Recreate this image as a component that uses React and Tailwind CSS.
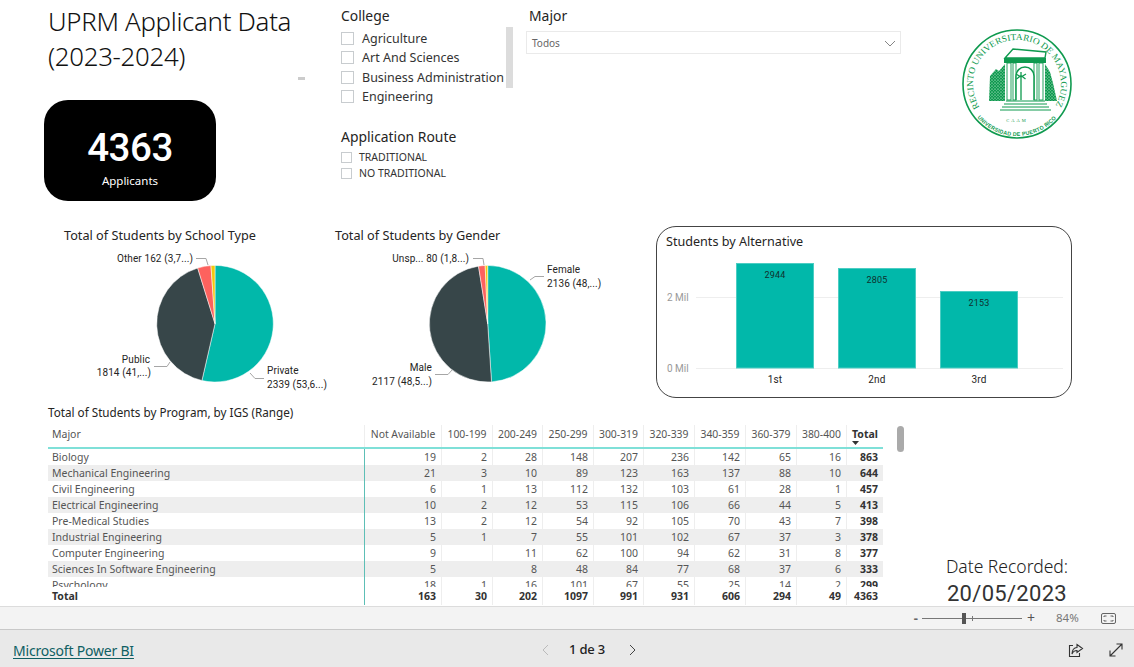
// UPRM applicant report, Power BI embed view
const SEGOE = 'font-["Noto_Sans",sans-serif]'
const DIN = 'font-["Roboto",sans-serif]'

const COLLEGES = ['Agriculture', 'Art And Sciences', 'Business Administration', 'Engineering']
const COLUMNS = ['Not Available', '100-199', '200-249', '250-299', '300-319', '320-339', '340-359', '360-379', '380-400']
const ROWS = [
  ['Biology', 19, 2, 28, 148, 207, 236, 142, 65, 16, 863],
  ['Mechanical Engineering', 21, 3, 10, 89, 123, 163, 137, 88, 10, 644],
  ['Civil Engineering', 6, 1, 13, 112, 132, 103, 61, 28, 1, 457],
  ['Electrical Engineering', 10, 2, 12, 53, 115, 106, 66, 44, 5, 413],
  ['Pre-Medical Studies', 13, 2, 12, 54, 92, 105, 70, 43, 7, 398],
  ['Industrial Engineering', 5, 1, 7, 55, 101, 102, 67, 37, 3, 378],
  ['Computer Engineering', 9, '', 11, 62, 100, 94, 62, 31, 8, 377],
  ['Sciences In Software Engineering', 5, '', 8, 48, 84, 77, 68, 37, 6, 333],
  ['Psychology', 18, 1, 16, 101, 67, 55, 25, 14, 2, 299],
]
const TOTALS = ['Total', 163, 30, 202, 1097, 991, 931, 606, 294, 49, 4363]
const GRID = 'grid grid-cols-[317px_77px_51px_50px_51px_50px_51px_51px_51px_50px_36px]'

const PIE_COLORS = ['#01B8AA', '#374649', '#FD625E', '#F2C80F']

// slices go clockwise from 12 o'clock
const slicePaths = (cx, cy, r, shares) => {
  let angle = 0
  return shares.map((share) => {
    const start = angle
    angle += share * Math.PI * 2
    const x1 = cx + r * Math.sin(start)
    const y1 = cy - r * Math.cos(start)
    const x2 = cx + r * Math.sin(angle)
    const y2 = cy - r * Math.cos(angle)
    return `M${cx} ${cy}L${x1} ${y1}A${r} ${r} 0 ${share > 0.5 ? 1 : 0} 1 ${x2} ${y2}Z`
  })
}

const PieChart = ({ title, titleClass, widthClass, viewBox, cx, shares, labels, leaders }) => {
  const [vx, vy, vw, vh] = viewBox
  return (
    <div className={`${widthClass} shrink-0`}>
      <p className={`${SEGOE} ${titleClass} h-[18px] text-[12.7px] leading-[18px] text-[#252423] whitespace-nowrap`}>{title}</p>
      <svg width={vw} height={vh} viewBox={viewBox.join(' ')} className={`${DIN} block`}>
        {slicePaths(cx, 323.7, 58.3, shares).map((d, i) => (
          <path key={i} d={d} fill={PIE_COLORS[i]} stroke="#fff" strokeWidth="0.5" />
        ))}
        {leaders.map((points) => (
          <polyline key={points} points={points} fill="none" stroke="#a6a6a6" strokeWidth="1" />
        ))}
        {labels.map(([text, x, y, anchor]) => (
          <text key={text} x={x} y={y} textAnchor={anchor} fontSize="10" letterSpacing="0.1" fill="#252423">{text}</text>
        ))}
      </svg>
    </div>
  )
}

const BARS = [
  { label: '1st', value: 2944, x: 736.5, top: 263.5 },
  { label: '2nd', value: 2805, x: 838.5, top: 268.5 },
  { label: '3rd', value: 2153, x: 940.5, top: 291.5 },
]

const BarChart = () => (
  <div className="ml-[46px] h-[172px] w-[416px] shrink-0 rounded-[20px] border border-[#444] pl-[9px] pt-[5px]">
    <p className={`${SEGOE} h-[18px] text-[12.6px] leading-[20px] text-[#252423]`}>Students by Alternative</p>
    <svg width="404" height="143" viewBox="666 250 404 143" className={`${DIN} block`}>
      <line x1="696" x2="1063" y1="297.5" y2="297.5" stroke="#eee" />
      <line x1="696" x2="1063" y1="368.5" y2="368.5" stroke="#eee" />
      <text x="667" y="301" fontSize="10" fill="#999">2 Mil</text>
      <text x="667" y="372" fontSize="10" fill="#999">0 Mil</text>
      {BARS.map((bar) => (
        <g key={bar.label}>
          <rect x={bar.x} y={bar.top} width="77" height={368 - bar.top} fill="#01B8AA" stroke="#4ccdc3" />
          <text x={bar.x + 38.5} y={bar.top + 14.5} textAnchor="middle" fontSize="9" letterSpacing="0.2" fill="#10302e">{bar.value}</text>
          <text x={bar.x + 38.5} y="383" textAnchor="middle" fontSize="10" letterSpacing="0.2" fill="#252423">{bar.label}</text>
        </g>
      ))}
    </svg>
  </div>
)

// seal of the Mayagüez campus, simplified
const Seal = () => (
  <svg width="112" height="112" viewBox="0 0 112 112" className="shrink-0">
    <defs>
      <path id="seal-top" d="M18.7 79.3 A44 44 0 1 1 93.3 79.3" />
      <path id="seal-bottom" d="M19.2 86.9 A48 48 0 0 0 92.8 86.9" />
      <pattern id="seal-leaves" width="3" height="3" patternUnits="userSpaceOnUse">
        <rect width="3" height="3" fill="#0f9a4f" />
        <circle cx="1" cy="1" r="0.6" fill="#fff" />
        <circle cx="2.4" cy="2.3" r="0.35" fill="#fff" />
      </pattern>
    </defs>
    <circle cx="56" cy="56" r="54" fill="none" stroke="#0f9a4f" strokeWidth="1.6" />
    <text fontSize="9" fontFamily="Liberation Serif, serif" fill="#0f9a4f">
      <textPath href="#seal-top" startOffset="0" textLength="185" lengthAdjust="spacingAndGlyphs">RECINTO UNIVERSITARIO DE MAYAGUEZ</textPath>
    </text>
    <text fontSize="5.6" fontWeight="700" fontFamily="Liberation Sans, sans-serif" fill="#0f9a4f" dominantBaseline="hanging">
      <textPath href="#seal-bottom" startOffset="0" textLength="83" lengthAdjust="spacingAndGlyphs">UNIVERSIDAD DE PUERTO RICO</textPath>
    </text>
    <text x="56" y="94" textAnchor="middle" fontSize="4.5" fontFamily="Liberation Serif, serif" letterSpacing="2" fill="#0f9a4f">CAAM</text>
    {/* foliage either side */}
    <path d="M29 48 L35 41 L38 43 L44 36 V73 H28 Z M84 36 L89 44 L92 55 L96 73 H84 Z" fill="url(#seal-leaves)" />
    {/* arcade */}
    <path d="M44 30 L52 21 L85 24 L84 30Z" fill="#fff" stroke="#0f9a4f" strokeWidth="1.4" />
    <rect x="43" y="30" width="42" height="5" fill="#0f9a4f" />
    <rect x="46" y="35" width="4" height="37" fill="#fff" stroke="#0f9a4f" strokeWidth="0.9" />
    <rect x="52" y="35" width="3" height="37" fill="#fff" stroke="#0f9a4f" strokeWidth="0.9" />
    <rect x="73" y="35" width="3" height="37" fill="#fff" stroke="#0f9a4f" strokeWidth="0.9" />
    <rect x="78" y="35" width="4" height="37" fill="#fff" stroke="#0f9a4f" strokeWidth="0.9" />
    <path d="M55 72 V48 A9 9 0 0 1 73 48 V72" fill="#fff" stroke="#0f9a4f" strokeWidth="1.5" />
    {/* palm in the arch */}
    <path d="M60 72 V49 M55 46 L60 49 L65 46 M55.5 51 L60 47.5 L64.5 51 M60 44 V49" stroke="#0f9a4f" strokeWidth="1.3" fill="none" />
    {/* steps */}
    <path d="M45 73 H84 M43 76 H86 M41 79 H88 M39 82 H90" stroke="#0f9a4f" strokeWidth="1" />
  </svg>
)

const Checkbox = ({ size }) => <span className={`${size} block shrink-0 border border-[#c8cccf] bg-white`} />

const TopRow = () => (
  <div className={`${SEGOE} flex h-[226px] text-[#252423]`}>
    <div className="w-[298px] shrink-0 pl-[44px]">
      <h1 className="ml-[4px] pt-[4px] text-[25.8px] font-light leading-[35px] tracking-[-0.3px] text-[#111] whitespace-nowrap">
        UPRM Applicant Data<br />(2023-2024)
      </h1>
      <div className="mt-[26px] flex h-[101px] w-[172px] flex-col items-center rounded-[24px] bg-black text-white">
        <span className={`${DIN} mt-[25px] text-[38.5px] font-medium leading-[46px] tracking-[-0.5px]`}>4363</span>
        <span className="mt-[2px] text-[11.5px] leading-[16px]">Applicants</span>
      </div>
    </div>
    <span className="mt-[77px] h-[3px] w-[7px] shrink-0 bg-[#ccc]" />
    <div className="ml-[36px] w-[172px] shrink-0 pt-[6px]">
      <p className="text-[13.9px] leading-[20px]">College</p>
      <div className="relative mt-[3px] flex">
        <div className="w-[165px]">
          {COLLEGES.map((name) => (
            <div key={name} className="flex h-[19.3px] items-center gap-[8px]">
              <Checkbox size="h-[13px] w-[13px]" />
              <span className="text-[12.5px] leading-[19px] text-[#333] whitespace-nowrap">{name}</span>
            </div>
          ))}
        </div>
        <span className="absolute left-[165px] top-[-2px] h-[61px] w-[7px] bg-[#dcdcdc]" />
      </div>
      <p className="mt-[21px] text-[13.9px] leading-[20px] whitespace-nowrap">Application Route</p>
      <div className="mt-[2px]">
        {['TRADITIONAL', 'NO TRADITIONAL'].map((name) => (
          <div key={name} className="flex h-[16px] items-center gap-[7px]">
            <Checkbox size="h-[11px] w-[11px]" />
            <span className="text-[10.5px] leading-[16px] text-[#333] whitespace-nowrap">{name}</span>
          </div>
        ))}
      </div>
    </div>
    <div className="ml-[13px] w-[375px] shrink-0 pt-[6px]">
      <p className="pl-[3px] text-[13.9px] leading-[20px]">Major</p>
      <div className="mt-[5px] flex h-[23px] items-center justify-between border border-[#eaeaea] pl-[5px] pr-[4px] pt-[2px]">
        <span className="text-[10px] text-[#666]">Todos</span>
        <svg width="12" height="7" viewBox="0 0 12 7" fill="none" stroke="#777" strokeWidth="0.9"><path d="M1 1l5 5 5-5" /></svg>
      </div>
    </div>
    <div className="ml-[60px] pt-[28px]">
      <Seal />
    </div>
  </div>
)

const MiddleRow = () => (
  <div className="flex h-[178px]">
    <PieChart
      title="Total of Students by School Type"
      titleClass="pl-[16px]"
      widthClass="w-[282px] ml-[48px]"
      viewBox={[48, 244, 282, 158]}
      cx={215}
      shares={[0.536, 0.416, 0.037, 0.011]}
      leaders={['196,258.5 206,258.5 208,265', '154,366.5 167,366.5 170,362', '250,373 255,378.5 264,378.5']}
      labels={[
        ['Other 162 (3,7...)', 193, 262, 'end'],
        ['Public', 150, 363, 'end'],
        ['1814 (41,...)', 151, 376, 'end'],
        ['Private', 267, 374, 'start'],
        ['2339 (53,6...)', 267, 388, 'start'],
      ]}
    />
    <PieChart
      title="Total of Students by Gender"
      titleClass="pl-[5px]"
      widthClass="w-[280px]"
      viewBox={[330, 244, 280, 158]}
      cx={487.7}
      shares={[0.4896, 0.4852, 0.0183, 0.0069]}
      leaders={['473,258.5 483,258.5 484,265', '435,374.5 448,374.5 452,370', '530,280 535,276.5 544,276.5']}
      labels={[
        ['Unsp... 80 (1,8...)', 469, 262, 'end'],
        ['Male', 432, 371, 'end'],
        ['2117 (48,5...)', 432, 385, 'end'],
        ['Female', 547, 273, 'start'],
        ['2136 (48,...)', 547, 287, 'start'],
      ]}
    />
    <BarChart />
  </div>
)

const MatrixTable = () => (
  <div className={`${SEGOE} w-[835px] shrink-0 text-[10.5px] text-[#555]`}>
    <div className={`${GRID} h-[24px] border-b-2 border-[#7fe0d8]`}>
      <span className="border-r border-[#eee] pl-[4px] leading-[19px]">Major</span>
      {COLUMNS.map((col) => (
        <span key={col} className="border-r border-[#eee] text-center text-[10.4px] leading-[19px] whitespace-nowrap">{col}</span>
      ))}
      <span className="relative pl-[5px] font-bold leading-[19px] text-[#333]">
        Total
        <svg width="7" height="4" viewBox="0 0 7 4" className="absolute left-[5px] top-[16px]"><path d="M0 0h7L3.5 4z" fill="#333" /></svg>
      </span>
    </div>
    <div className="h-[138px] overflow-hidden">
      {ROWS.map(([major, ...nums], i) => (
        <div key={major} className={`${GRID} h-[16px] leading-[16px] ${i % 2 === 1 ? 'bg-[#eee]' : ''}`}>
          <span className="border-r border-[#5dbfb6] pl-[4px] whitespace-nowrap">{major}</span>
          {nums.map((n, j) => (
            <span key={j} className={j === 9 ? 'pr-[5px] text-right font-bold text-[#333]' : 'border-r border-[#eee] pr-[5px] text-right'}>{n}</span>
          ))}
        </div>
      ))}
    </div>
    <div className={`${GRID} h-[17px] font-bold leading-[18px] text-[#333]`}>
      {TOTALS.map((n, i) => (
        <span key={n} className={i === 0 ? 'border-r border-[#5dbfb6] pl-[4px]' : i === 10 ? 'pr-[5px] text-right' : 'border-r border-[#eee] pr-[5px] text-right'}>{n}</span>
      ))}
    </div>
  </div>
)

const BottomRow = () => (
  <div className="flex flex-1 flex-col">
    <p className={`${SEGOE} ml-[48px] h-[21px] text-[11.7px] leading-[17px] text-[#252423]`}>Total of Students by Program, by IGS (Range)</p>
    <div className="ml-[48px] flex flex-1">
      <MatrixTable />
      <span className="ml-[14px] mt-[1px] h-[26px] w-[7px] shrink-0 rounded-full bg-[#aaa]" />
      <div className="flex w-[206px] flex-col items-center justify-end">
        <span className={`${SEGOE} text-[17.5px] font-light leading-[32px] text-[#222]`}>Date Recorded:</span>
        <span className={`${DIN} text-[22px] leading-[24px] tracking-[0.3px] text-[#333]`}>20/05/2023</span>
      </div>
    </div>
  </div>
)

const StatusBar = () => (
  <div className={`${SEGOE} flex h-[24px] shrink-0 items-center justify-end border-y border-[#dcdcdc] bg-[#f3f3f3] border-b-[#c8c8c8] pr-[18px] text-[#666]`}>
    <span className="text-[13px] font-bold leading-none">-</span>
    <div className="relative ml-[4px] h-[1px] w-[100px] bg-[#777]">
      <span className="absolute left-[40px] top-[-5px] h-[11px] w-[4px] bg-[#555]" />
      <span className="absolute left-[50px] top-[-2px] h-[5px] w-[1px] bg-[#777]" />
    </div>
    <span className="ml-[5px] text-[14px] leading-none text-[#555]">+</span>
    <span className="ml-[21px] w-[24px] text-[11.5px] text-[#777]">84%</span>
    <svg width="15" height="11" viewBox="0 0 15 11" fill="none" stroke="#555" strokeWidth="0.9" className="ml-[21px]">
      <rect x="0.5" y="0.5" width="14" height="10" rx="1.5" />
      <path d="M3 4V3h2.5M12 4V3H9.5M3 7v1h2.5M12 7v1H9.5" />
    </svg>
  </div>
)

const Footer = () => (
  <div className={`${SEGOE} flex h-[37px] shrink-0 items-center bg-[#e9e9e9] pl-[13px] pt-[3px]`}>
    <a className="w-[528px] shrink-0 text-[14px] tracking-[-0.2px] text-[#0f5f63] underline underline-offset-2 whitespace-nowrap">Microsoft Power BI</a>
    <svg width="9" height="12" viewBox="0 0 9 12" fill="none" stroke="#bbb" strokeWidth="1" className="shrink-0"><path d="M7 1L2 6l5 5" /></svg>
    <span className="ml-[19px] shrink-0 text-[13px] font-medium tracking-[-0.2px] text-[#222] whitespace-nowrap">1 de 3</span>
    <svg width="9" height="12" viewBox="0 0 9 12" fill="none" stroke="#444" strokeWidth="1" className="ml-[23px] shrink-0"><path d="M2 1l5 5-5 5" /></svg>
    <svg width="16" height="15" viewBox="0 0 16 15" fill="none" stroke="#333" strokeWidth="1.1" className="ml-[431px] shrink-0">
      <path d="M5 2.5H1.5v11h10V10" />
      <path d="M9 1.5l5.5 4-5.5 4V7.5C7 7.5 5 8.5 4 11c0-4 2-6.5 5-6.5z" />
    </svg>
    <svg width="14" height="14" viewBox="0 0 14 14" fill="none" stroke="#333" strokeWidth="1.1" className="ml-[25px] shrink-0">
      <path d="M1 13L13 1M7.5 1H13v5.5M1 7.5V13h5.5" />
    </svg>
  </div>
)

export default function App() {
  return (
    <div className="flex h-[667px] w-[1134px] flex-col overflow-hidden bg-white">
      <div className="flex h-[606px] shrink-0 flex-col">
        <TopRow />
        <MiddleRow />
        <BottomRow />
      </div>
      <StatusBar />
      <Footer />
    </div>
  )
}
